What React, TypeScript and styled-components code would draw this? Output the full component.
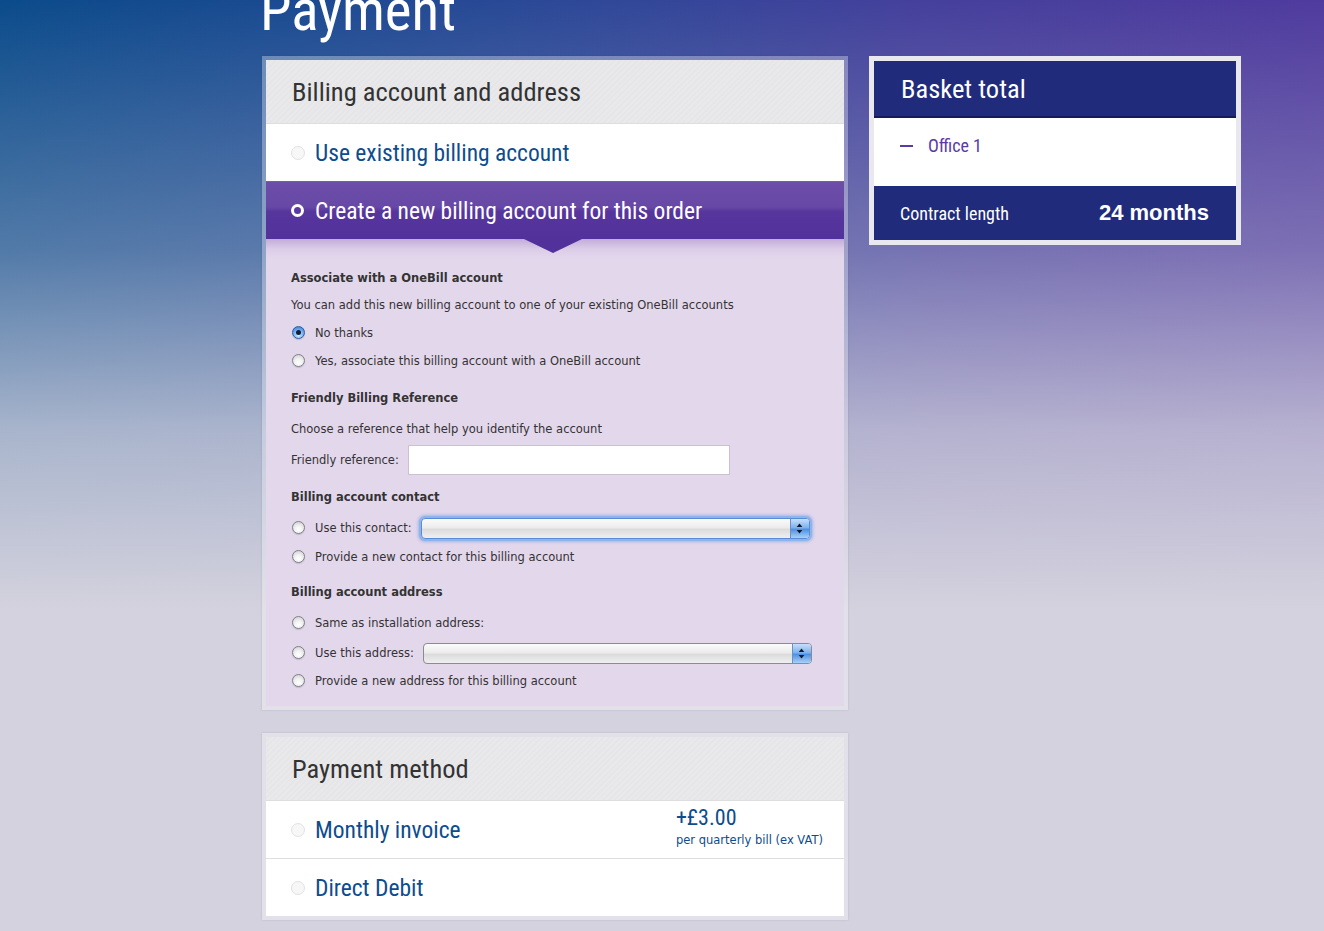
import React from 'react'
import styled, { createGlobalStyle, css } from 'styled-components'

const narrow = `"Liberation Sans Narrow", "Roboto Condensed", "Arial Narrow", "Liberation Sans", sans-serif`
const body = `"DejaVu Sans", "Liberation Sans", sans-serif`

const GlobalStyle = createGlobalStyle`
  html {
    background: #d4d2de;
  }
  body {
    margin: 0;
    min-height: 931px;
    overflow: hidden;
    font-family: ${body};
    background:
      linear-gradient(180deg, rgba(212, 210, 222, 0) 0px, rgba(212, 210, 222, 0.35) 250px, rgba(212, 210, 222, 0.78) 430px, #d4d2de 610px),
      linear-gradient(90deg, #0b4b8b 0%, #1d4a92 25%, #2f4898 45%, #45409c 70%, #4f3b9e 100%);
  }
`

const Page = styled.div`
  padding: 0 0 20px 262px;
  display: flex;
  flex-direction: column;
`

const Title = styled.h1`
  margin: -18px 0 17px -2px;
  font-family: ${narrow};
  font-weight: normal;
  font-size: 57px;
  line-height: 57px;
  color: #fff;
`

const Columns = styled.div`
  display: flex;
  gap: 21px;
  align-items: flex-start;
`

const MainColumn = styled.div`
  width: 586px;
  display: flex;
  flex-direction: column;
  gap: 23px;
`

const Panel = styled.section`
  padding: 4px;
  background: rgba(255, 255, 255, 0.32);
  box-shadow: 0 0 2px rgba(40, 40, 90, 0.15);
`

const PanelHeader = styled.h2`
  margin: 0;
  height: 63px;
  display: flex;
  align-items: center;
  padding-left: 26px;
  background: repeating-linear-gradient(135deg, #e9e9eb 0 2px, #e6e6e9 2px 4px);
  font-family: ${narrow};
  font-weight: normal;
  font-size: 26.5px;
  color: #333;
`

const OptionRow = styled.div<{ $selected?: boolean }>`
  position: relative;
  height: 57px;
  display: flex;
  align-items: center;
  padding: 0 21px 0 25px;
  border-top: 1px solid #dddde2;
  background: #fff;
  ${(p) =>
    p.$selected &&
    css`
      border-top-color: #7a5ab6;
      background: linear-gradient(180deg, #6c4ea9 0%, #6748a6 44%, #56369d 52%, #52319b 100%);
      &::after {
        content: '';
        position: absolute;
        left: 50%;
        bottom: -14px;
        margin-left: -31px;
        border-left: 29px solid transparent;
        border-right: 29px solid transparent;
        border-top: 14px solid #52319b;
        z-index: 1;
      }
    `}
`

const BigRadio = styled.span<{ $selected?: boolean }>`
  flex: none;
  width: 14px;
  height: 14px;
  box-sizing: border-box;
  border-radius: 50%;
  border: 1px solid #e2e2e6;
  background: #f7f7f8;
  margin-right: 10px;
  ${(p) =>
    p.$selected &&
    css`
      border: 3px solid #fff;
      background: #5a3aa0;
      width: 13px;
      height: 13px;
      margin-right: 11px;
    `}
`

const OptionLabel = styled.span<{ $selected?: boolean }>`
  font-family: ${narrow};
  font-size: 23.5px;
  color: ${(p) => (p.$selected ? '#fff' : '#0d4c8e')};
`

const FormBody = styled.div`
  padding: 25px 25px 11px 25px;
  background: linear-gradient(180deg, #c2acd9 0px, #dccde8 10px, #e3d7ec 20px, #e3d7ec 100%);
  color: #333;
  font-size: 11.5px;
`

const Group = styled.div<{ $gap?: number }>`
  display: flex;
  flex-direction: column;
  margin-top: ${(p) => p.$gap ?? 0}px;
`

const SubHeading = styled.h3`
  margin: 0;
  height: 27px;
  line-height: 29px;
  font-size: 11.5px;
  font-weight: bold;
`

const Line = styled.div<{ $top?: number; $h?: number }>`
  display: flex;
  align-items: center;
  height: ${(p) => p.$h ?? 28}px;
  margin-top: ${(p) => p.$top ?? 0}px;
`

const SmallRadio = styled.span<{ $checked?: boolean }>`
  flex: none;
  position: relative;
  width: 13px;
  height: 13px;
  box-sizing: border-box;
  border-radius: 50%;
  margin: 0 10px 2px 1px;
  border: 1px solid #7f7f85;
  background: radial-gradient(circle at 50% 70%, #ffffff 0%, #f2f2f2 40%, #c9c9cc 100%);
  box-shadow: 0 1px 1px rgba(0, 0, 0, 0.15);
  ${(p) =>
    p.$checked &&
    css`
      border-color: #2a5ea8;
      background: radial-gradient(circle at 50% 75%, #d4ecff 0%, #7fb7ef 45%, #2f74cf 100%);
      &::after {
        content: '';
        position: absolute;
        left: 3px;
        top: 3px;
        width: 5px;
        height: 5px;
        border-radius: 50%;
        background: #0f1f3a;
      }
    `}
`

const FieldLabel = styled.span`
  margin-right: 9px;
`

const TextInput = styled.input`
  width: 322px;
  height: 30px;
  box-sizing: border-box;
  border: 1px solid #c9c3cf;
  background: #fff;
  outline: none;
`

const FakeSelect = styled.div<{ $focused?: boolean }>`
  position: relative;
  width: 389px;
  height: 21px;
  box-sizing: border-box;
  display: flex;
  border: 1px solid #8b8b92;
  border-radius: 4px;
  overflow: hidden;
  background: linear-gradient(180deg, #fbfbfb 0%, #ececec 45%, #dcdcdc 55%, #efefef 100%);
  ${(p) =>
    p.$focused &&
    css`
      border-color: #5a8bd6;
      box-shadow: 0 0 0 2px #8db5ec, 0 0 3px 3px rgba(90, 140, 220, 0.45);
    `}
`

const SelectCap = styled.span`
  margin-left: auto;
  width: 18px;
  display: flex;
  align-items: center;
  justify-content: center;
  border-left: 1px solid #6b8fc9;
  background: linear-gradient(180deg, #c7e0fa 0%, #7fb2ee 45%, #4f92e3 55%, #a9d0f8 100%);
`

const Arrows = () => (
  <svg width="7" height="11" viewBox="0 0 7 11">
    <path d="M3.5 0.5 L6.3 4 L0.7 4 Z" fill="#10182a" />
    <path d="M3.5 10.5 L6.3 7 L0.7 7 Z" fill="#10182a" />
  </svg>
)

const PriceRow = styled(OptionRow)`
  justify-content: flex-start;
`

const Price = styled.div`
  margin-left: auto;
  margin-top: -4px;
  display: flex;
  flex-direction: column;
  color: #0d4c8e;
`

const PriceAmount = styled.span`
  font-family: ${narrow};
  font-size: 22px;
  line-height: 24px;
`

const PriceNote = styled.span`
  font-size: 11.5px;
  line-height: 20px;
`

const Basket = styled.aside`
  width: 362px;
  padding: 5px;
  background: #e9e8ee;
`

const BasketHeader = styled.h2`
  margin: 0;
  height: 55px;
  display: flex;
  align-items: center;
  padding-left: 27px;
  background: #202b7b;
  border-bottom: 2px solid #141b5c;
  font-family: ${narrow};
  font-weight: normal;
  font-size: 26.5px;
  color: #fff;
`

const BasketItems = styled.div`
  height: 68px;
  background: #fff;
  padding: 17px 26px 0;
  box-sizing: border-box;
`

const BasketItem = styled.div`
  display: flex;
  align-items: center;
  font-family: ${narrow};
  font-size: 18px;
  color: #5b3aa3;
`

const Dash = styled.span`
  width: 13px;
  height: 2px;
  background: #5b3aa3;
  margin-right: 15px;
`

const BasketFooter = styled.div`
  height: 54px;
  display: flex;
  align-items: center;
  justify-content: space-between;
  padding: 0 27px 0 26px;
  background: #202b7b;
  color: #fff;
`

const FooterLabel = styled.span`
  font-family: ${narrow};
  font-size: 18px;
`

const FooterValue = styled.span`
  font-family: "Liberation Sans", sans-serif;
  font-weight: bold;
  font-size: 22px;
`

const Radio = ({ checked, children }: { checked?: boolean; children: React.ReactNode }) => (
  <>
    <SmallRadio $checked={checked} />
    {children}
  </>
)

export default function App() {
  return (
    <>
      <GlobalStyle />
      <Page>
        <Title>Payment</Title>
        <Columns>
          <MainColumn>
            <Panel>
              <PanelHeader>Billing account and address</PanelHeader>
              <OptionRow>
                <BigRadio />
                <OptionLabel>Use existing billing account</OptionLabel>
              </OptionRow>
              <OptionRow $selected>
                <BigRadio $selected />
                <OptionLabel $selected>Create a new billing account for this order</OptionLabel>
              </OptionRow>
              <FormBody>
                <Group>
                  <SubHeading>Associate with a OneBill account</SubHeading>
                  <Line>You can add this new billing account to one of your existing OneBill accounts</Line>
                  <Line>
                    <Radio checked>No thanks</Radio>
                  </Line>
                  <Line>
                    <Radio>Yes, associate this billing account with a OneBill account</Radio>
                  </Line>
                </Group>
                <Group $gap={9}>
                  <SubHeading>Friendly Billing Reference</SubHeading>
                  <Line $top={4}>Choose a reference that help you identify the account</Line>
                  <Line $top={2} $h={30}>
                    <FieldLabel>Friendly reference:</FieldLabel>
                    <TextInput />
                  </Line>
                </Group>
                <Group $gap={8}>
                  <SubHeading>Billing account contact</SubHeading>
                  <Line $top={4}>
                    <Radio>
                      <FieldLabel>Use this contact:</FieldLabel>
                    </Radio>
                    <FakeSelect $focused>
                      <SelectCap>
                        <Arrows />
                      </SelectCap>
                    </FakeSelect>
                  </Line>
                  <Line $top={1}>
                    <Radio>Provide a new contact for this billing account</Radio>
                  </Line>
                </Group>
                <Group $gap={7}>
                  <SubHeading>Billing account address</SubHeading>
                  <Line $top={4}>
                    <Radio>Same as installation address:</Radio>
                  </Line>
                  <Line $top={2}>
                    <Radio>
                      <FieldLabel>Use this address:</FieldLabel>
                    </Radio>
                    <FakeSelect>
                      <SelectCap>
                        <Arrows />
                      </SelectCap>
                    </FakeSelect>
                  </Line>
                  <Line>
                    <Radio>Provide a new address for this billing account</Radio>
                  </Line>
                </Group>
              </FormBody>
            </Panel>

            <Panel>
              <PanelHeader>Payment method</PanelHeader>
              <PriceRow>
                <BigRadio />
                <OptionLabel>Monthly invoice</OptionLabel>
                <Price>
                  <PriceAmount>+£3.00</PriceAmount>
                  <PriceNote>per quarterly bill (ex VAT)</PriceNote>
                </Price>
              </PriceRow>
              <OptionRow>
                <BigRadio />
                <OptionLabel>Direct Debit</OptionLabel>
              </OptionRow>
            </Panel>
          </MainColumn>

          <Basket>
            <BasketHeader>Basket total</BasketHeader>
            <BasketItems>
              <BasketItem>
                <Dash />
                Office 1
              </BasketItem>
            </BasketItems>
            <BasketFooter>
              <FooterLabel>Contract length</FooterLabel>
              <FooterValue>24 months</FooterValue>
            </BasketFooter>
          </Basket>
        </Columns>
      </Page>
    </>
  )
}
